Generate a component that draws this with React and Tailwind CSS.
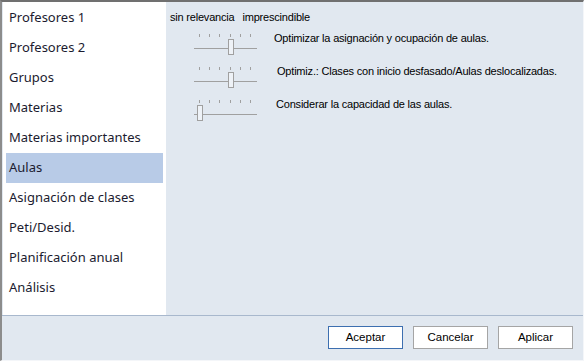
import React from 'react'

const items = [
  'Profesores 1',
  'Profesores 2',
  'Grupos',
  'Materias',
  'Materias importantes',
  'Aulas',
  'Asignación de clases',
  'Peti/Desid.',
  'Planificación anual',
  'Análisis',
]

const rows = [
  { label: 'Optimizar la asignación y ocupación de aulas.', thumb: 36 },
  { label: 'Optimiz.: Clases con inicio desfasado/Aulas deslocalizadas.', thumb: 36 },
  { label: 'Considerar la capacidad de las aulas.', thumb: 5 },
]

function Slider({ thumb }) {
  const ticks = [7, 17, 27, 38, 48, 58]
  return (
    <svg width="66" height="24" viewBox="0 0 66 24" className="shrink-0">
      {ticks.map(t => (
        <line key={t} x1={t + 0.5} y1="2" x2={t + 0.5} y2="5" stroke="#a0a0a0" strokeWidth="1" />
      ))}
      <line x1="2" y1="16.5" x2="65" y2="16.5" stroke="#a0a0a0" strokeWidth="1" />
      <rect x={thumb + 0.5} y="7.5" width="5" height="15" fill="#eef2f7" stroke="#a0a0a0" strokeWidth="1" />
    </svg>
  )
}

export default function App() {
  const selected = 'Aulas'
  return (
    <div className="w-[584px] h-[361px] flex flex-col bg-[#e1e8f0] border-t-2 border-t-[#707070] border-l-2 border-l-[#8c8c8c] border-r border-r-[#f4f6f9] border-b border-b-[#f4f6f9] text-[#000] overflow-hidden" style={{ fontFamily: '"Liberation Sans", Arial, sans-serif' }}>
      <div className="flex h-[313px] shrink-0">
        {/* list */}
        <div className="ml-px w-[163px] bg-white pt-px px-[3px]" style={{ fontFamily: '"Noto Sans", "Open Sans", sans-serif' }}>
          {items.map(it => (
            <div
              key={it}
              className={`h-[30px] flex items-center pl-[3px] text-[13px] text-[#1b1b2f] ${it === selected ? 'bg-[#b8cbe7]' : ''}`}
            >
              {it}
            </div>
          ))}
        </div>

        {/* content */}
        <div className="flex-1 pl-[4px] pt-[8px] text-[11px] tracking-[-0.2px]">
          <div className="flex h-[14px] items-center leading-none">
            <span>sin relevancia</span>
            <span className="ml-[8px]">imprescindible</span>
          </div>
          <div className="mt-[8px] flex flex-col">
            {rows.map((r, i) => (
              <div key={i} className="flex h-[33px] items-start">
                <div className="ml-[22px]">
                  <Slider thumb={r.thumb} />
                </div>
                <span className={`-mt-px leading-[14px] ${i === 0 ? 'ml-[16px]' : i === 1 ? 'ml-[19px]' : 'ml-[18px]'}`}>{r.label}</span>
              </div>
            ))}
          </div>
        </div>
      </div>

      <div className="h-px bg-[#a8b8cd] shrink-0" />

      <div className="flex-1 flex justify-end items-start pt-[10px] pr-[10px] gap-[10px] text-[11.5px]">
        <button className="w-[75px] h-[23px] bg-white border border-[#3d6fb0]">Aceptar</button>
        <button className="w-[75px] h-[23px] bg-white border border-[#a5a5a5]">Cancelar</button>
        <button className="w-[75px] h-[23px] bg-white border border-[#a5a5a5]">Aplicar</button>
      </div>
    </div>
  )
}
